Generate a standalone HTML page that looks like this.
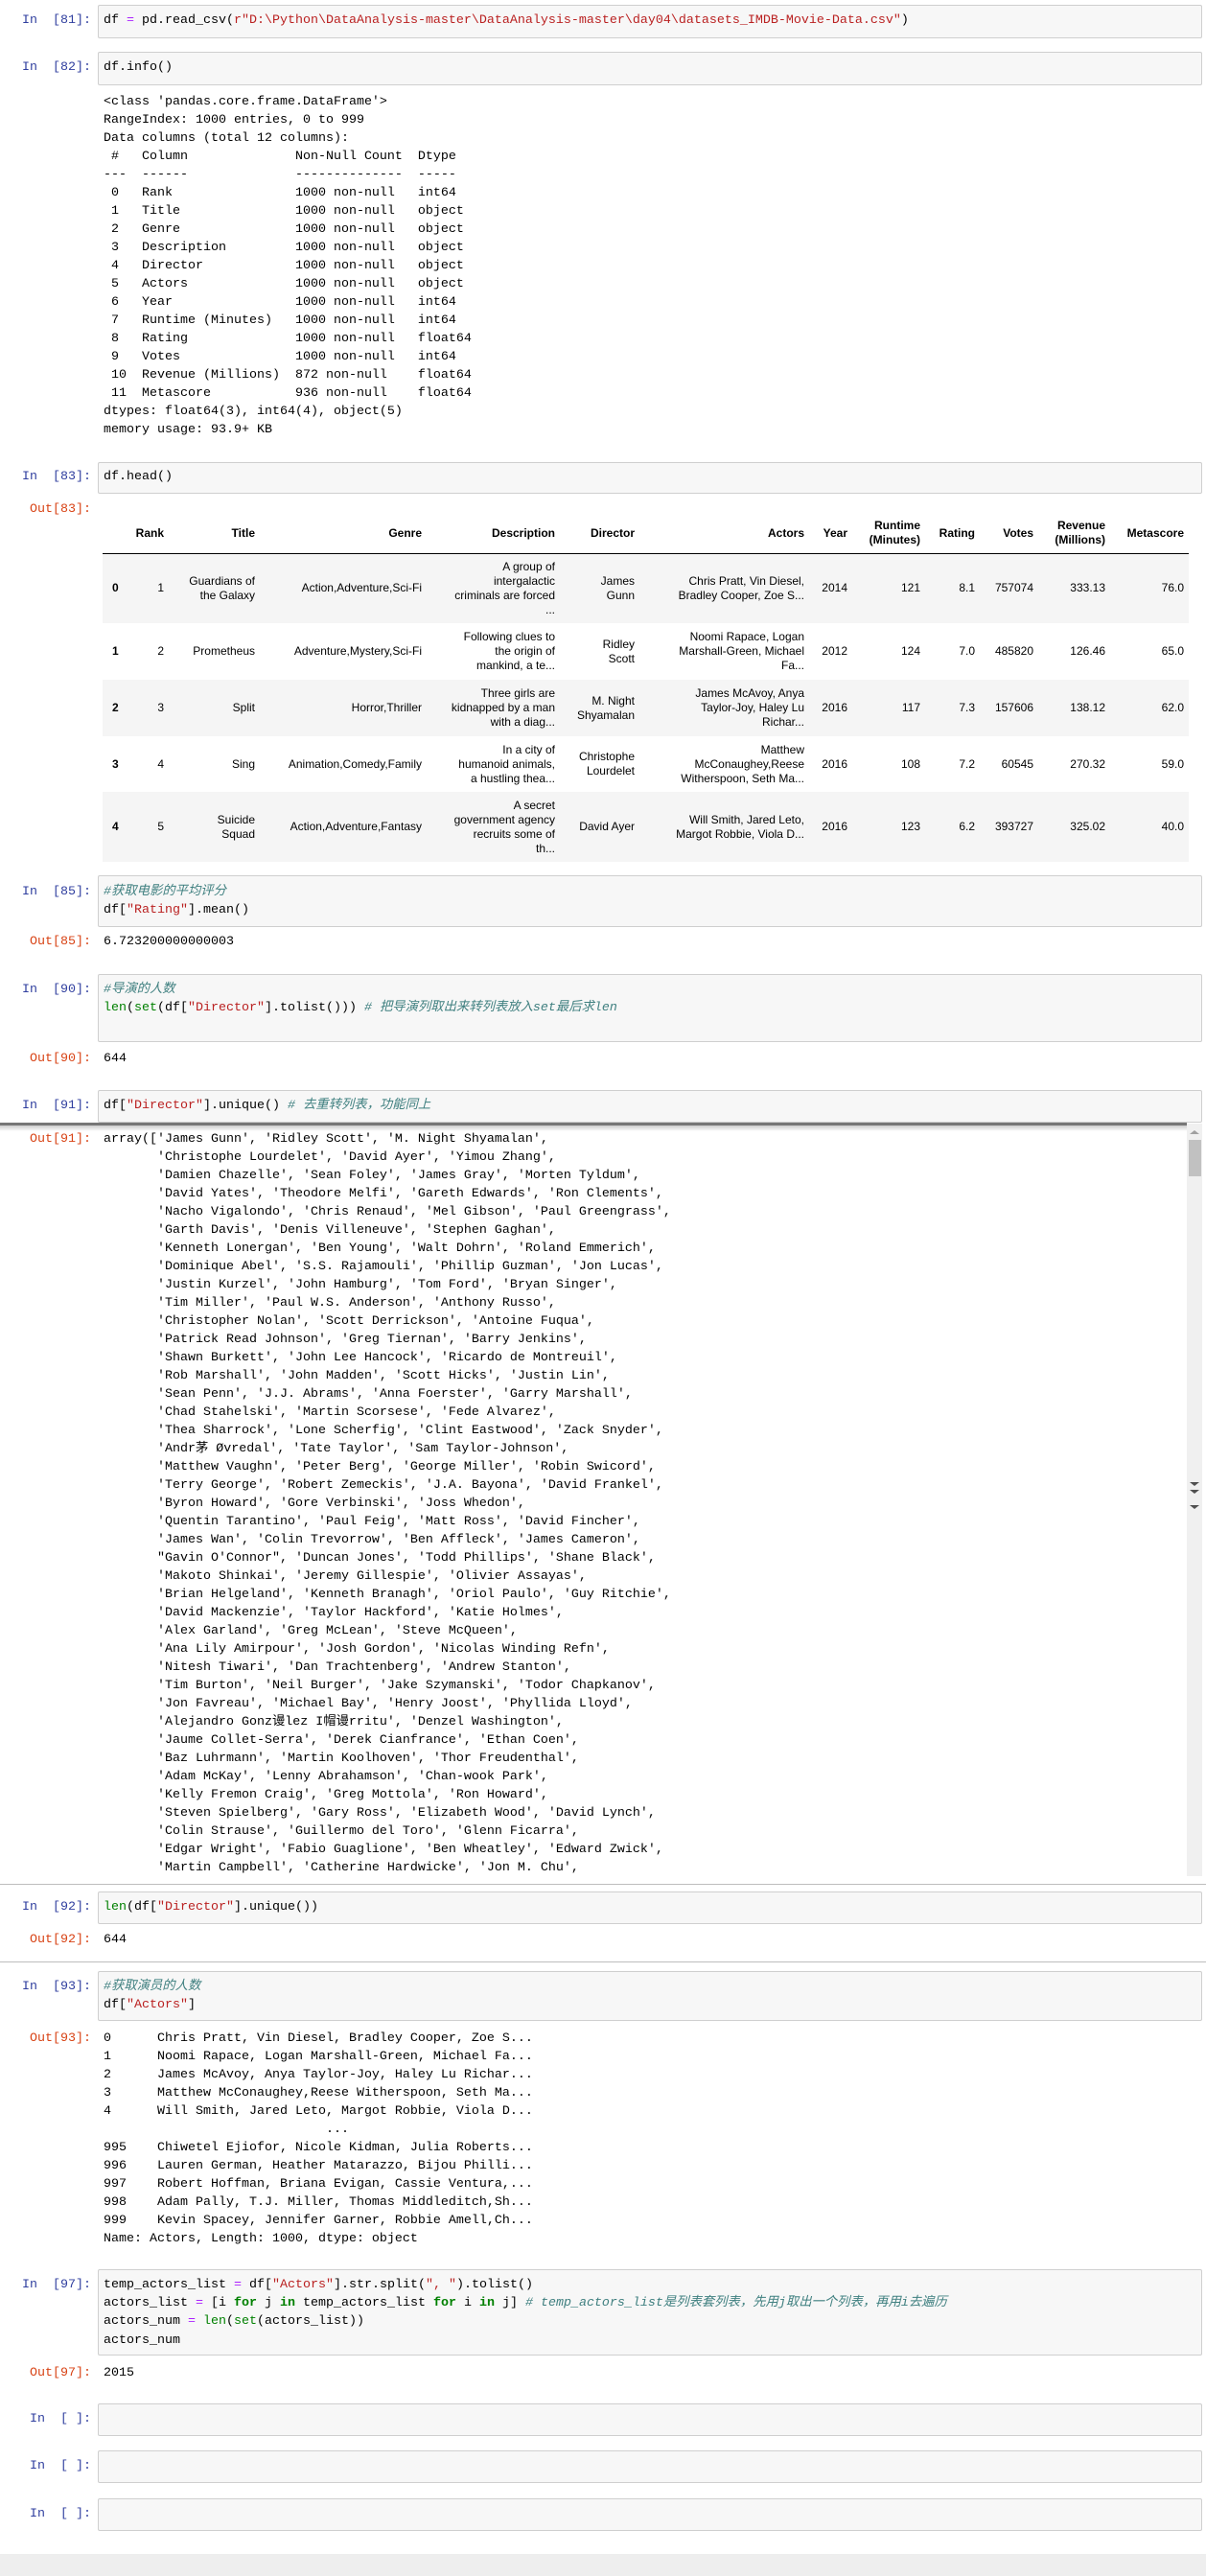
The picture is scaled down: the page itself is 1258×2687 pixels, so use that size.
<!DOCTYPE html>
<html><head><meta charset="utf-8">
<style>
*{margin:0;padding:0;box-sizing:border-box}
body{width:1258px;height:2687px;position:relative;background:#fff;overflow:hidden;font-family:"Liberation Mono","Noto Sans CJK SC",monospace}
.p{position:absolute;left:0;width:95px;text-align:right;white-space:pre;font:13.33px/19px "Liberation Mono",monospace;letter-spacing:0px;height:19px}
.in{color:#303f9f}.out{color:#d84315}
.b{position:absolute;left:102px;width:1152px;background:#f7f7f7;border:1px solid #cfcfcf;border-radius:2px}
.l{position:absolute;left:108px;white-space:pre;font:13.33px/19px "Liberation Mono","Noto Sans CJK SC",monospace;height:19px;color:#000}
.s{color:#ba2121}.c{color:#408080;font-style:italic}.g{color:#008000}.k{color:#008000;font-weight:bold}.o{color:#aa22ff}
table{position:absolute;left:107px;top:536px;border-collapse:collapse;table-layout:fixed;font:12px/15px "Liberation Sans",Arial,sans-serif;color:#000}
td,th{text-align:right;padding:0 5px 0 0;white-space:nowrap;vertical-align:middle}
th{font-weight:bold;height:41px;border-bottom:1px solid #000}
td.i{text-align:left;padding-left:10px;font-weight:bold}
tr.e td{background:#f5f5f5}
.sb{position:absolute;left:1238px;top:1172px;width:16px;height:785px;background:#f0f0f0}
.tri{position:absolute;left:1241px;width:0;height:0;border-left:5px solid transparent;border-right:5px solid transparent}
</style></head><body>

<!-- 81 -->
<div class="p in" style="top:12px">In  [81]:</div>
<div class="b" style="top:5px;height:35px"></div>
<div class="l" style="top:12px">df <span class="o">=</span> pd.read_csv(<span class="s">r"D:\Python\DataAnalysis-master\DataAnalysis-master\day04\datasets_IMDB-Movie-Data.csv"</span>)</div>

<!-- 82 -->
<div class="p in" style="top:61px">In  [82]:</div>
<div class="b" style="top:54px;height:35px"></div>
<div class="l" style="top:61px">df.info()</div>
<div class="l" style="top:97px">&lt;class 'pandas.core.frame.DataFrame'&gt;
RangeIndex: 1000 entries, 0 to 999
Data columns (total 12 columns):
 #   Column              Non-Null Count  Dtype  
---  ------              --------------  -----  
 0   Rank                1000 non-null   int64  
 1   Title               1000 non-null   object 
 2   Genre               1000 non-null   object 
 3   Description         1000 non-null   object 
 4   Director            1000 non-null   object 
 5   Actors              1000 non-null   object 
 6   Year                1000 non-null   int64  
 7   Runtime (Minutes)   1000 non-null   int64  
 8   Rating              1000 non-null   float64
 9   Votes               1000 non-null   int64  
 10  Revenue (Millions)  872 non-null    float64
 11  Metascore           936 non-null    float64
dtypes: float64(3), int64(4), object(5)
memory usage: 93.9+ KB</div>

<!-- 83 -->
<div class="p in" style="top:488px">In  [83]:</div>
<div class="b" style="top:482px;height:33px"></div>
<div class="l" style="top:488px">df.head()</div>
<div class="p out" style="top:522px">Out[83]:</div>
<table>
<colgroup><col style="width:28px"><col style="width:41px"><col style="width:95px"><col style="width:174px"><col style="width:139px"><col style="width:83px"><col style="width:177px"><col style="width:45px"><col style="width:76px"><col style="width:57px"><col style="width:61px"><col style="width:75px"><col style="width:82px"></colgroup>
<tr><th></th><th>Rank</th><th>Title</th><th>Genre</th><th>Description</th><th>Director</th><th>Actors</th><th>Year</th><th>Runtime<br>(Minutes)</th><th>Rating</th><th>Votes</th><th>Revenue<br>(Millions)</th><th>Metascore</th></tr>
<tr class="e" style="height:73px"><td class="i">0</td><td>1</td><td>Guardians of<br>the Galaxy</td><td>Action,Adventure,Sci-Fi</td><td>A group of<br>intergalactic<br>criminals are forced<br>...</td><td>James<br>Gunn</td><td>Chris Pratt, Vin Diesel,<br>Bradley Cooper, Zoe S...</td><td>2014</td><td>121</td><td>8.1</td><td>757074</td><td>333.13</td><td>76.0</td></tr>
<tr style="height:59px"><td class="i">1</td><td>2</td><td>Prometheus</td><td>Adventure,Mystery,Sci-Fi</td><td>Following clues to<br>the origin of<br>mankind, a te...</td><td>Ridley<br>Scott</td><td>Noomi Rapace, Logan<br>Marshall-Green, Michael<br>Fa...</td><td>2012</td><td>124</td><td>7.0</td><td>485820</td><td>126.46</td><td>65.0</td></tr>
<tr class="e" style="height:59px"><td class="i">2</td><td>3</td><td>Split</td><td>Horror,Thriller</td><td>Three girls are<br>kidnapped by a man<br>with a diag...</td><td>M. Night<br>Shyamalan</td><td>James McAvoy, Anya<br>Taylor-Joy, Haley Lu<br>Richar...</td><td>2016</td><td>117</td><td>7.3</td><td>157606</td><td>138.12</td><td>62.0</td></tr>
<tr style="height:58px"><td class="i">3</td><td>4</td><td>Sing</td><td>Animation,Comedy,Family</td><td>In a city of<br>humanoid animals,<br>a hustling thea...</td><td>Christophe<br>Lourdelet</td><td>Matthew<br>McConaughey,Reese<br>Witherspoon, Seth Ma...</td><td>2016</td><td>108</td><td>7.2</td><td>60545</td><td>270.32</td><td>59.0</td></tr>
<tr class="e" style="height:73px"><td class="i">4</td><td>5</td><td>Suicide<br>Squad</td><td>Action,Adventure,Fantasy</td><td>A secret<br>government agency<br>recruits some of<br>th...</td><td>David Ayer</td><td>Will Smith, Jared Leto,<br>Margot Robbie, Viola D...</td><td>2016</td><td>123</td><td>6.2</td><td>393727</td><td>325.02</td><td>40.0</td></tr>
</table>

<!-- 85 -->
<div class="p in" style="top:921px">In  [85]:</div>
<div class="b" style="top:913px;height:54px"></div>
<div class="l" style="top:921px"><span class="c">#获取电影的平均评分</span></div>
<div class="l" style="top:940px">df[<span class="s">"Rating"</span>].mean()</div>
<div class="p out" style="top:973px">Out[85]:</div>
<div class="l" style="top:973px">6.723200000000003</div>

<!-- 90 -->
<div class="p in" style="top:1023px">In  [90]:</div>
<div class="b" style="top:1016px;height:71px"></div>
<div class="l" style="top:1023px"><span class="c">#导演的人数</span></div>
<div class="l" style="top:1042px"><span class="g">len</span>(<span class="g">set</span>(df[<span class="s">"Director"</span>].tolist())) <span class="c"># 把导演列取出来转列表放入set最后求len</span></div>
<div class="p out" style="top:1095px">Out[90]:</div>
<div class="l" style="top:1095px">644</div>

<!-- 91 -->
<div class="p in" style="top:1144px">In  [91]:</div>
<div class="b" style="top:1137px;height:34px"></div>
<div class="l" style="top:1144px">df[<span class="s">"Director"</span>].unique() <span class="c"># 去重转列表，功能同上</span></div>
<div style="position:absolute;left:0;top:1171px;width:1238px;height:3px;background:#777"></div>
<div style="position:absolute;left:0;top:1174px;width:1238px;height:6px;background:linear-gradient(#ccc,#fff)"></div>
<div class="sb"></div>
<div style="position:absolute;left:1240px;top:1189px;width:13px;height:38px;background:#c1c1c1"></div>
<div class="tri" style="top:1179px;border-bottom:4px solid #a0a0a0"></div>
<div class="tri" style="top:1546px;border-top:4px solid #505050"></div>
<div class="tri" style="top:1554px;border-top:4px solid #505050"></div>
<div class="tri" style="top:1570px;border-top:4px solid #505050"></div>
<div class="p out" style="top:1179px">Out[91]:</div>
<div class="l" style="top:1179px">array(['James Gunn', 'Ridley Scott', 'M. Night Shyamalan',
       'Christophe Lourdelet', 'David Ayer', 'Yimou Zhang',
       'Damien Chazelle', 'Sean Foley', 'James Gray', 'Morten Tyldum',
       'David Yates', 'Theodore Melfi', 'Gareth Edwards', 'Ron Clements',
       'Nacho Vigalondo', 'Chris Renaud', 'Mel Gibson', 'Paul Greengrass',
       'Garth Davis', 'Denis Villeneuve', 'Stephen Gaghan',
       'Kenneth Lonergan', 'Ben Young', 'Walt Dohrn', 'Roland Emmerich',
       'Dominique Abel', 'S.S. Rajamouli', 'Phillip Guzman', 'Jon Lucas',
       'Justin Kurzel', 'John Hamburg', 'Tom Ford', 'Bryan Singer',
       'Tim Miller', 'Paul W.S. Anderson', 'Anthony Russo',
       'Christopher Nolan', 'Scott Derrickson', 'Antoine Fuqua',
       'Patrick Read Johnson', 'Greg Tiernan', 'Barry Jenkins',
       'Shawn Burkett', 'John Lee Hancock', 'Ricardo de Montreuil',
       'Rob Marshall', 'John Madden', 'Scott Hicks', 'Justin Lin',
       'Sean Penn', 'J.J. Abrams', 'Anna Foerster', 'Garry Marshall',
       'Chad Stahelski', 'Martin Scorsese', 'Fede Alvarez',
       'Thea Sharrock', 'Lone Scherfig', 'Clint Eastwood', 'Zack Snyder',
       'Andr茅 Øvredal', 'Tate Taylor', 'Sam Taylor-Johnson',
       'Matthew Vaughn', 'Peter Berg', 'George Miller', 'Robin Swicord',
       'Terry George', 'Robert Zemeckis', 'J.A. Bayona', 'David Frankel',
       'Byron Howard', 'Gore Verbinski', 'Joss Whedon',
       'Quentin Tarantino', 'Paul Feig', 'Matt Ross', 'David Fincher',
       'James Wan', 'Colin Trevorrow', 'Ben Affleck', 'James Cameron',
       "Gavin O'Connor", 'Duncan Jones', 'Todd Phillips', 'Shane Black',
       'Makoto Shinkai', 'Jeremy Gillespie', 'Olivier Assayas',
       'Brian Helgeland', 'Kenneth Branagh', 'Oriol Paulo', 'Guy Ritchie',
       'David Mackenzie', 'Taylor Hackford', 'Katie Holmes',
       'Alex Garland', 'Greg McLean', 'Steve McQueen',
       'Ana Lily Amirpour', 'Josh Gordon', 'Nicolas Winding Refn',
       'Nitesh Tiwari', 'Dan Trachtenberg', 'Andrew Stanton',
       'Tim Burton', 'Neil Burger', 'Jake Szymanski', 'Todor Chapkanov',
       'Jon Favreau', 'Michael Bay', 'Henry Joost', 'Phyllida Lloyd',
       'Alejandro Gonz谩lez I帽谩rritu', 'Denzel Washington',
       'Jaume Collet-Serra', 'Derek Cianfrance', 'Ethan Coen',
       'Baz Luhrmann', 'Martin Koolhoven', 'Thor Freudenthal',
       'Adam McKay', 'Lenny Abrahamson', 'Chan-wook Park',
       'Kelly Fremon Craig', 'Greg Mottola', 'Ron Howard',
       'Steven Spielberg', 'Gary Ross', 'Elizabeth Wood', 'David Lynch',
       'Colin Strause', 'Guillermo del Toro', 'Glenn Ficarra',
       'Edgar Wright', 'Fabio Guaglione', 'Ben Wheatley', 'Edward Zwick',
       'Martin Campbell', 'Catherine Hardwicke', 'Jon M. Chu',</div>
<div style="position:absolute;left:0;top:1958px;width:1258px;height:7px;background:#fff"></div>
<div style="position:absolute;left:0;top:1965px;width:1258px;height:1px;background:#bdbdbd"></div>

<!-- 92 -->
<div class="p in" style="top:1980px">In  [92]:</div>
<div class="b" style="top:1973px;height:34px"></div>
<div class="l" style="top:1980px"><span class="g">len</span>(df[<span class="s">"Director"</span>].unique())</div>
<div class="p out" style="top:2014px">Out[92]:</div>
<div class="l" style="top:2014px">644</div>
<div style="position:absolute;left:0;top:2046px;width:1258px;height:1px;background:#bdbdbd"></div>

<!-- 93 -->
<div class="p in" style="top:2063px">In  [93]:</div>
<div class="b" style="top:2056px;height:52px"></div>
<div class="l" style="top:2063px"><span class="c">#获取演员的人数</span></div>
<div class="l" style="top:2082px">df[<span class="s">"Actors"</span>]</div>
<div class="p out" style="top:2117px">Out[93]:</div>
<div class="l" style="top:2117px">0      Chris Pratt, Vin Diesel, Bradley Cooper, Zoe S...
1      Noomi Rapace, Logan Marshall-Green, Michael Fa...
2      James McAvoy, Anya Taylor-Joy, Haley Lu Richar...
3      Matthew McConaughey,Reese Witherspoon, Seth Ma...
4      Will Smith, Jared Leto, Margot Robbie, Viola D...
                             ...                        
995    Chiwetel Ejiofor, Nicole Kidman, Julia Roberts...
996    Lauren German, Heather Matarazzo, Bijou Philli...
997    Robert Hoffman, Briana Evigan, Cassie Ventura,...
998    Adam Pally, T.J. Miller, Thomas Middleditch,Sh...
999    Kevin Spacey, Jennifer Garner, Robbie Amell,Ch...
Name: Actors, Length: 1000, dtype: object</div>

<!-- 97 -->
<div class="p in" style="top:2374px">In  [97]:</div>
<div class="b" style="top:2367px;height:90px"></div>
<div class="l" style="top:2374px">temp_actors_list <span class="o">=</span> df[<span class="s">"Actors"</span>].str.split(<span class="s">", "</span>).tolist()</div>
<div class="l" style="top:2393px">actors_list <span class="o">=</span> [i <span class="k">for</span> j <span class="k">in</span> temp_actors_list <span class="k">for</span> i <span class="k">in</span> j] <span class="c"># temp_actors_list是列表套列表，先用j取出一个列表，再用i去遍历</span></div>
<div class="l" style="top:2412px">actors_num <span class="o">=</span> <span class="g">len</span>(<span class="g">set</span>(actors_list))</div>
<div class="l" style="top:2432px">actors_num</div>
<div class="p out" style="top:2466px">Out[97]:</div>
<div class="l" style="top:2466px">2015</div>

<!-- empty -->
<div class="p in" style="top:2514px">In  [ ]:</div>
<div class="b" style="top:2507px;height:34px"></div>
<div class="p in" style="top:2563px">In  [ ]:</div>
<div class="b" style="top:2556px;height:34px"></div>
<div class="p in" style="top:2613px">In  [ ]:</div>
<div class="b" style="top:2606px;height:34px"></div>

<div style="position:absolute;left:0;top:2664px;width:1258px;height:23px;background:#eeeeee"></div>
</body></html>
